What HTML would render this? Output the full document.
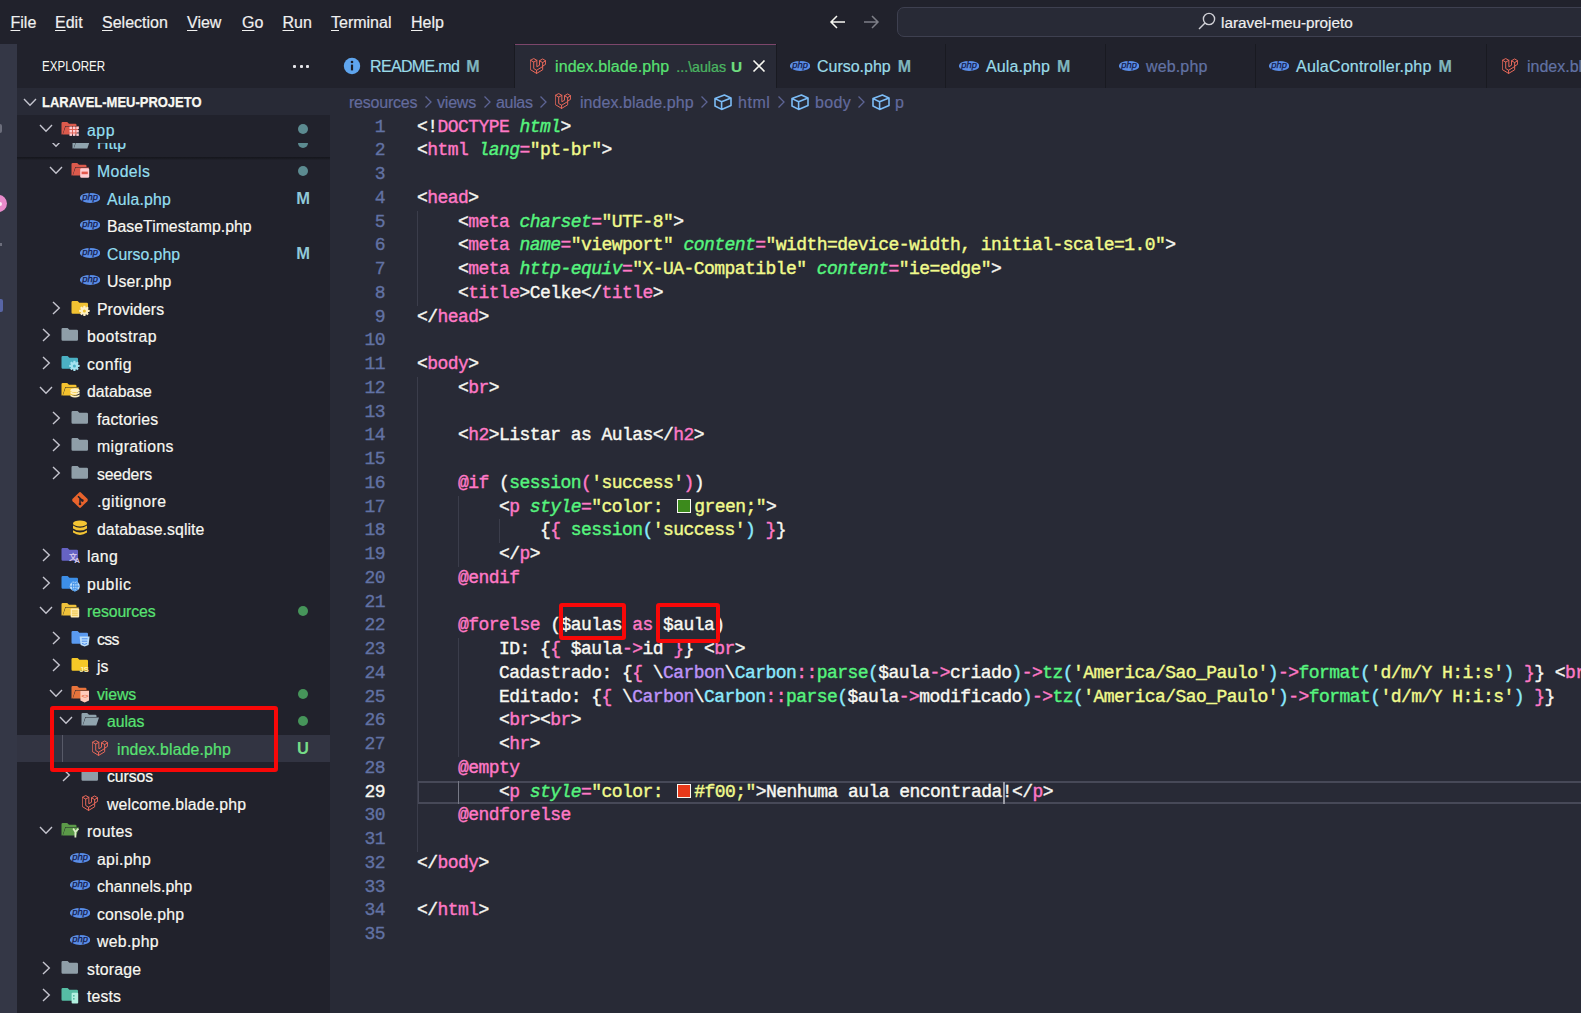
<!DOCTYPE html>
<html lang="pt-br"><head><meta charset="utf-8"><title>index.blade.php - laravel-meu-projeto</title>
<style>
html,body{margin:0;padding:0}
body{width:1581px;height:1013px;position:relative;overflow:hidden;background:#282a36;font-family:"Liberation Sans",sans-serif;color:#f8f8f2}
.ab{position:absolute}
#title{left:0;top:0;width:1581px;height:44px;background:#21222c}
.mi{top:0;height:45px;line-height:45px;font-size:16px;-webkit-text-stroke:0.2px;color:#f0f0f0;white-space:nowrap}
.mi u{text-underline-offset:2px}
#act{left:0;top:44px;width:17px;height:969px;background:#343746}
#side{left:17px;top:44px;width:313px;height:969px;background:#21222c}
#sechead{left:17px;top:88px;width:313px;height:27px;background:#282a36}
.lbl{height:27.5px;line-height:29.0px;font-size:15.8px;-webkit-text-stroke:0.2px;white-space:nowrap}
.bdg{width:20px;text-align:center;height:27.5px;line-height:26px;font-size:16.5px;font-weight:bold}
.dot{width:10px;height:10px;border-radius:5px}
#tabsbg{left:330px;top:44px;width:1251px;height:44px;background:#191a21}
.tl{height:44px;line-height:46px;font-size:16px;-webkit-text-stroke:0.2px;white-space:nowrap}
.tl .sfx{margin-left:7px;font-weight:bold;font-size:16px}
.tl .desc + .sfx{margin-left:5px;font-size:15.4px}
.tl .desc{margin-left:7px;font-size:14.2px;opacity:.75}
.bc{top:88px;height:27.5px;line-height:29px;font-size:16px;-webkit-text-stroke:0.2px;color:#636b9d;white-space:nowrap}
.ln{left:330px;width:55px;text-align:right;height:23.75px;line-height:23.8px;font-family:"Liberation Mono",monospace;font-size:18px;letter-spacing:-0.552px;color:#6272a4;-webkit-text-stroke:0.35px}
.ln.cur{color:#f8f8f2}
.cl{left:417px;height:23.75px;line-height:23.8px;font-family:"Liberation Mono",monospace;font-size:18px;letter-spacing:-0.552px;white-space:pre;color:#f8f8f2;-webkit-text-stroke:0.4px}
.cl .i{font-style:italic}
.sw{display:inline-block;width:14px;height:14px;margin:0 3.5px;vertical-align:-1px;border:1px solid #f8f8f2;box-sizing:border-box}
.rb{border:4px solid #f80808;border-radius:3px;box-sizing:border-box}
</style></head><body>
<div id="title" class="ab"></div>
<div class="ab mi" style="left:10.5px"><u>F</u>ile</div><div class="ab mi" style="left:55px"><u>E</u>dit</div><div class="ab mi" style="left:102px"><u>S</u>election</div><div class="ab mi" style="left:187px"><u>V</u>iew</div><div class="ab mi" style="left:242px"><u>G</u>o</div><div class="ab mi" style="left:282.5px"><u>R</u>un</div><div class="ab mi" style="left:331px"><u>T</u>erminal</div><div class="ab mi" style="left:411px"><u>H</u>elp</div>
<svg class="ab" style="left:829px;top:13px" width="18" height="18" viewBox="0 0 18 18"><path d="M16 9 H2.5 M8 3 L2 9 L8 15" fill="none" stroke="#f8f8f2" stroke-width="1.5"/></svg>
<svg class="ab" style="left:862px;top:13px" width="18" height="18" viewBox="0 0 18 18"><path d="M2 9 H15.5 M10 3 L16 9 L10 15" fill="none" stroke="#7e7f88" stroke-width="1.5"/></svg>
<div class="ab" style="left:897px;top:7px;width:720px;height:30px;box-sizing:border-box;border:1px solid #3e4050;border-radius:7px;background:#282a36"></div>
<svg class="ab" style="left:1197px;top:11px" width="20" height="20" viewBox="0 0 20 20"><circle cx="12" cy="8" r="5.6" fill="none" stroke="#d0d0d6" stroke-width="1.4"/><path d="M8 12 L2 18" stroke="#d0d0d6" stroke-width="1.4"/></svg>
<div class="ab mi" style="left:1221px;font-size:15.3px;line-height:46px">laravel-meu-projeto</div>

<div id="act" class="ab"></div>
<div class="ab" style="left:-10.5px;top:195px;width:17px;height:17px;border-radius:9px;background:#e88bcb"></div>
<div class="ab" style="left:-2.5px;top:201.5px;width:4px;height:4px;border-radius:2px;background:#f8eaf4"></div>
<div class="ab" style="left:0;top:124px;width:2px;height:9px;border-radius:0 2px 2px 0;background:#6c6e7c"></div>
<div class="ab" style="left:0;top:243px;width:2px;height:3px;background:#6c6e7c"></div>
<div class="ab" style="left:0;top:299px;width:2.5px;height:13px;border-radius:0 2px 2px 0;background:#5865a5"></div>
<div id="side" class="ab"></div>
<div class="ab" style="left:42px;top:44px;height:44px;line-height:45px;font-size:13.8px;color:#f8f8f2;transform:scaleX(.84);transform-origin:0 50%">EXPLORER</div>
<div class="ab" style="left:293px;top:64.5px;width:3px;height:3px;border-radius:1px;background:#e4e4e8"></div><div class="ab" style="left:299.5px;top:64.5px;width:3px;height:3px;border-radius:1px;background:#e4e4e8"></div><div class="ab" style="left:306px;top:64.5px;width:3px;height:3px;border-radius:1px;background:#e4e4e8"></div>
<div id="sechead" class="ab"></div>
<svg class="ab" style="left:23px;top:94.5px" width="14" height="14" viewBox="0 0 14 14"><path d="M1 4 L7 10.2 L13 4" fill="none" stroke="#c5c5cf" stroke-width="1.4"/></svg>
<div class="ab" style="left:42px;top:88px;height:27.5px;line-height:29.6px;font-size:13.8px;font-weight:bold;color:#f8f8f2;-webkit-text-stroke:0.25px;transform:scaleX(.94);transform-origin:0 50%">LARAVEL-MEU-PROJETO</div>
<svg class="ab" style="left:49px;top:163.2px" width="14" height="14" viewBox="0 0 14 14"><path d="M1 4 L7 10.2 L13 4" fill="none" stroke="#c5c5cf" stroke-width="1.4"/></svg><svg class="ab" style="left:70.3px;top:160.4px" width="20" height="20" viewBox="0 0 20 20"><path d="M1.5 4.2 Q1.5 3 2.7 3 H7.2 L9 4.8 H15.3 Q16.5 4.8 16.5 6 V7 H5.3 L2.6 15.5 H1.5 Z" fill="#dc5a4c"/><path d="M5.6 7.6 H19 L16.3 15.6 H2.8 Z" fill="#dc5a4c"/><rect x="10.2" y="8.3" width="9" height="9.4" rx="1.3" fill="#ffcdd2"/><rect x="11.6" y="11.6" width="6.2" height="2.6" fill="#e2574c"/></svg><div class="ab lbl" style="left:97px;top:157.25px;color:#93dff0;letter-spacing:0.377px">Models</div><div class="ab dot" style="left:298px;top:166.0px;background:#5c8b91"></div>
<svg class="ab" style="left:80px;top:188.5px" width="20" height="20" viewBox="0 0 20 20"><ellipse cx="10.1" cy="8.9" rx="10.2" ry="5" fill="#5a8de6"/><text x="10.1" y="11.3" text-anchor="middle" font-family="Liberation Sans, sans-serif" font-style="italic" font-size="9.4" fill="#141a48" stroke="#141a48" stroke-width="0.25">php</text></svg><div class="ab lbl" style="left:107px;top:184.75px;color:#93dff0;letter-spacing:0.216px">Aula.php</div><div class="ab bdg" style="left:293px;top:184.75px;color:#90c8d8">M</div>
<svg class="ab" style="left:80px;top:216.0px" width="20" height="20" viewBox="0 0 20 20"><ellipse cx="10.1" cy="8.9" rx="10.2" ry="5" fill="#5a8de6"/><text x="10.1" y="11.3" text-anchor="middle" font-family="Liberation Sans, sans-serif" font-style="italic" font-size="9.4" fill="#141a48" stroke="#141a48" stroke-width="0.25">php</text></svg><div class="ab lbl" style="left:107px;top:212.25px;color:#f8f8f2;letter-spacing:0.018px">BaseTimestamp.php</div>
<svg class="ab" style="left:80px;top:243.5px" width="20" height="20" viewBox="0 0 20 20"><ellipse cx="10.1" cy="8.9" rx="10.2" ry="5" fill="#5a8de6"/><text x="10.1" y="11.3" text-anchor="middle" font-family="Liberation Sans, sans-serif" font-style="italic" font-size="9.4" fill="#141a48" stroke="#141a48" stroke-width="0.25">php</text></svg><div class="ab lbl" style="left:107px;top:239.75px;color:#93dff0;letter-spacing:0.012px">Curso.php</div><div class="ab bdg" style="left:293px;top:239.75px;color:#90c8d8">M</div>
<svg class="ab" style="left:80px;top:271.0px" width="20" height="20" viewBox="0 0 20 20"><ellipse cx="10.1" cy="8.9" rx="10.2" ry="5" fill="#5a8de6"/><text x="10.1" y="11.3" text-anchor="middle" font-family="Liberation Sans, sans-serif" font-style="italic" font-size="9.4" fill="#141a48" stroke="#141a48" stroke-width="0.25">php</text></svg><div class="ab lbl" style="left:107px;top:267.25px;color:#f8f8f2;letter-spacing:0.146px">User.php</div>
<svg class="ab" style="left:49px;top:300.7px" width="14" height="14" viewBox="0 0 14 14"><path d="M4 1 L10.3 7 L4 13" fill="none" stroke="#c5c5cf" stroke-width="1.4"/></svg><svg class="ab" style="left:70.3px;top:297.9px" width="20" height="20" viewBox="0 0 20 20"><path d="M1.5 4.2 Q1.5 3 2.7 3 H7.6 L9.4 4.8 H16.8 Q18 4.8 18 6 V14.6 Q18 15.8 16.8 15.8 H2.7 Q1.5 15.8 1.5 14.6 Z" fill="#f1c232"/><rect x="13.3" y="7.7" width="2.2" height="10.4" rx="0.4" transform="rotate(0 14.4 12.9)" fill="#fff1c4"/><rect x="13.3" y="7.7" width="2.2" height="10.4" rx="0.4" transform="rotate(45 14.4 12.9)" fill="#fff1c4"/><rect x="13.3" y="7.7" width="2.2" height="10.4" rx="0.4" transform="rotate(90 14.4 12.9)" fill="#fff1c4"/><rect x="13.3" y="7.7" width="2.2" height="10.4" rx="0.4" transform="rotate(135 14.4 12.9)" fill="#fff1c4"/><circle cx="14.4" cy="12.9" r="3.7" fill="#fff1c4"/><circle cx="14.4" cy="12.9" r="1.5" fill="#f1c232"/></svg><div class="ab lbl" style="left:97px;top:294.75px;color:#f8f8f2;letter-spacing:0.041px">Providers</div>
<svg class="ab" style="left:39px;top:328.2px" width="14" height="14" viewBox="0 0 14 14"><path d="M4 1 L10.3 7 L4 13" fill="none" stroke="#c5c5cf" stroke-width="1.4"/></svg><svg class="ab" style="left:60.3px;top:325.4px" width="20" height="20" viewBox="0 0 20 20"><path d="M1.5 4.2 Q1.5 3 2.7 3 H7.6 L9.4 4.8 H16.8 Q18 4.8 18 6 V14.6 Q18 15.8 16.8 15.8 H2.7 Q1.5 15.8 1.5 14.6 Z" fill="#8f9ea8"/></svg><div class="ab lbl" style="left:87px;top:322.25px;color:#f8f8f2;letter-spacing:0.469px">bootstrap</div>
<svg class="ab" style="left:39px;top:355.7px" width="14" height="14" viewBox="0 0 14 14"><path d="M4 1 L10.3 7 L4 13" fill="none" stroke="#c5c5cf" stroke-width="1.4"/></svg><svg class="ab" style="left:60.3px;top:352.9px" width="20" height="20" viewBox="0 0 20 20"><path d="M1.5 4.2 Q1.5 3 2.7 3 H7.6 L9.4 4.8 H16.8 Q18 4.8 18 6 V14.6 Q18 15.8 16.8 15.8 H2.7 Q1.5 15.8 1.5 14.6 Z" fill="#4bb1c4"/><rect x="13.3" y="7.7" width="2.2" height="10.4" rx="0.4" transform="rotate(0 14.4 12.9)" fill="#a6e3f0"/><rect x="13.3" y="7.7" width="2.2" height="10.4" rx="0.4" transform="rotate(45 14.4 12.9)" fill="#a6e3f0"/><rect x="13.3" y="7.7" width="2.2" height="10.4" rx="0.4" transform="rotate(90 14.4 12.9)" fill="#a6e3f0"/><rect x="13.3" y="7.7" width="2.2" height="10.4" rx="0.4" transform="rotate(135 14.4 12.9)" fill="#a6e3f0"/><circle cx="14.4" cy="12.9" r="3.7" fill="#a6e3f0"/><circle cx="14.4" cy="12.9" r="1.5" fill="#4bb1c4"/></svg><div class="ab lbl" style="left:87px;top:349.75px;color:#f8f8f2;letter-spacing:0.474px">config</div>
<svg class="ab" style="left:39px;top:383.2px" width="14" height="14" viewBox="0 0 14 14"><path d="M1 4 L7 10.2 L13 4" fill="none" stroke="#c5c5cf" stroke-width="1.4"/></svg><svg class="ab" style="left:60.3px;top:380.4px" width="20" height="20" viewBox="0 0 20 20"><path d="M1.5 4.2 Q1.5 3 2.7 3 H7.2 L9 4.8 H15.3 Q16.5 4.8 16.5 6 V7 H5.3 L2.6 15.5 H1.5 Z" fill="#f4c22e"/><path d="M5.6 7.6 H19 L16.3 15.6 H2.8 Z" fill="#f4c22e"/><ellipse cx="15" cy="10.2" rx="4.6" ry="2" fill="#fff1c2"/><path d="M10.4 11.6 Q15 14.4 19.6 11.6 V13.4 Q15 16.2 10.4 13.4 Z M10.4 14.6 Q15 17.4 19.6 14.6 V16.2 Q15 19 10.4 16.2 Z" fill="#fff1c2"/></svg><div class="ab lbl" style="left:87px;top:377.25px;color:#f8f8f2;letter-spacing:-0.027px">database</div>
<svg class="ab" style="left:49px;top:410.7px" width="14" height="14" viewBox="0 0 14 14"><path d="M4 1 L10.3 7 L4 13" fill="none" stroke="#c5c5cf" stroke-width="1.4"/></svg><svg class="ab" style="left:70.3px;top:407.9px" width="20" height="20" viewBox="0 0 20 20"><path d="M1.5 4.2 Q1.5 3 2.7 3 H7.6 L9.4 4.8 H16.8 Q18 4.8 18 6 V14.6 Q18 15.8 16.8 15.8 H2.7 Q1.5 15.8 1.5 14.6 Z" fill="#8f9ea8"/></svg><div class="ab lbl" style="left:97px;top:404.75px;color:#f8f8f2;letter-spacing:0.166px">factories</div>
<svg class="ab" style="left:49px;top:438.2px" width="14" height="14" viewBox="0 0 14 14"><path d="M4 1 L10.3 7 L4 13" fill="none" stroke="#c5c5cf" stroke-width="1.4"/></svg><svg class="ab" style="left:70.3px;top:435.4px" width="20" height="20" viewBox="0 0 20 20"><path d="M1.5 4.2 Q1.5 3 2.7 3 H7.6 L9.4 4.8 H16.8 Q18 4.8 18 6 V14.6 Q18 15.8 16.8 15.8 H2.7 Q1.5 15.8 1.5 14.6 Z" fill="#8f9ea8"/></svg><div class="ab lbl" style="left:97px;top:432.25px;color:#f8f8f2;letter-spacing:0.402px">migrations</div>
<svg class="ab" style="left:49px;top:465.7px" width="14" height="14" viewBox="0 0 14 14"><path d="M4 1 L10.3 7 L4 13" fill="none" stroke="#c5c5cf" stroke-width="1.4"/></svg><svg class="ab" style="left:70.3px;top:462.9px" width="20" height="20" viewBox="0 0 20 20"><path d="M1.5 4.2 Q1.5 3 2.7 3 H7.6 L9.4 4.8 H16.8 Q18 4.8 18 6 V14.6 Q18 15.8 16.8 15.8 H2.7 Q1.5 15.8 1.5 14.6 Z" fill="#8f9ea8"/></svg><div class="ab lbl" style="left:97px;top:459.75px;color:#f8f8f2;letter-spacing:-0.172px">seeders</div>
<svg class="ab" style="left:70px;top:490.0px" width="20" height="20" viewBox="0 0 20 20"><rect x="4" y="4" width="12" height="12" rx="1.6" transform="rotate(45 10 10)" fill="#e8632c"/><path d="M8 6.2 L12.2 10.4 M10 8.2 V14" stroke="#21222c" stroke-width="1.5" fill="none"/><circle cx="10" cy="14" r="1.3" fill="#21222c"/><circle cx="12.4" cy="10.6" r="1.3" fill="#21222c"/></svg><div class="ab lbl" style="left:97px;top:487.25px;color:#f8f8f2;letter-spacing:0.45px">.gitignore</div>
<svg class="ab" style="left:70px;top:517.7px" width="20" height="20" viewBox="0 0 20 20" fill="#f4c533"><ellipse cx="10" cy="5.4" rx="7" ry="3"/><path d="M3 7.6 Q10 12 17 7.6 V10.4 Q10 14.8 3 10.4 Z M3 12.2 Q10 16.6 17 12.2 V14.6 Q10 19.4 3 14.6 Z"/></svg><div class="ab lbl" style="left:97px;top:514.75px;color:#f8f8f2;letter-spacing:0.075px">database.sqlite</div>
<svg class="ab" style="left:39px;top:548.2px" width="14" height="14" viewBox="0 0 14 14"><path d="M4 1 L10.3 7 L4 13" fill="none" stroke="#c5c5cf" stroke-width="1.4"/></svg><svg class="ab" style="left:60.3px;top:545.4px" width="20" height="20" viewBox="0 0 20 20"><path d="M1.5 4.2 Q1.5 3 2.7 3 H7.6 L9.4 4.8 H16.8 Q18 4.8 18 6 V14.6 Q18 15.8 16.8 15.8 H2.7 Q1.5 15.8 1.5 14.6 Z" fill="#6663c4"/><text x="9" y="14.5" font-family="Liberation Sans, Noto Sans CJK SC, sans-serif" font-size="8" font-weight="bold" fill="#d1c4e9">文</text><text x="14.2" y="17.6" font-family="Liberation Sans, sans-serif" font-size="8" font-weight="bold" fill="#d1c4e9">A</text></svg><div class="ab lbl" style="left:87px;top:542.25px;color:#f8f8f2;letter-spacing:0.281px">lang</div>
<svg class="ab" style="left:39px;top:575.7px" width="14" height="14" viewBox="0 0 14 14"><path d="M4 1 L10.3 7 L4 13" fill="none" stroke="#c5c5cf" stroke-width="1.4"/></svg><svg class="ab" style="left:60.3px;top:572.9px" width="20" height="20" viewBox="0 0 20 20"><path d="M1.5 4.2 Q1.5 3 2.7 3 H7.6 L9.4 4.8 H16.8 Q18 4.8 18 6 V14.6 Q18 15.8 16.8 15.8 H2.7 Q1.5 15.8 1.5 14.6 Z" fill="#3d8fe8"/><circle cx="14.8" cy="13.2" r="5" fill="#bbdefb"/><path d="M9.8 13.2 H19.8 M14.8 8.2 V18.2 M11.4 9.8 Q14.8 12 18.2 9.8 M11.4 16.6 Q14.8 14.4 18.2 16.6" stroke="#3d8fe8" stroke-width="0.9" fill="none"/><ellipse cx="14.8" cy="13.2" rx="2.3" ry="5" fill="none" stroke="#3d8fe8" stroke-width="0.9"/></svg><div class="ab lbl" style="left:87px;top:569.75px;color:#f8f8f2;letter-spacing:0.52px">public</div>
<svg class="ab" style="left:39px;top:603.2px" width="14" height="14" viewBox="0 0 14 14"><path d="M1 4 L7 10.2 L13 4" fill="none" stroke="#c5c5cf" stroke-width="1.4"/></svg><svg class="ab" style="left:60.3px;top:600.4px" width="20" height="20" viewBox="0 0 20 20"><path d="M1.5 4.2 Q1.5 3 2.7 3 H7.2 L9 4.8 H15.3 Q16.5 4.8 16.5 6 V7 H5.3 L2.6 15.5 H1.5 Z" fill="#f0c23a"/><path d="M5.6 7.6 H19 L16.3 15.6 H2.8 Z" fill="#f0c23a"/><rect x="10.6" y="8.6" width="8.6" height="9" rx="1" fill="#ffecb3"/><path d="M12 11 H17.8 M12 13.1 H17.8 M12 15.2 H17.8" stroke="#f0c23a" stroke-width="1"/></svg><div class="ab lbl" style="left:87px;top:597.25px;color:#58e272;letter-spacing:-0.084px">resources</div><div class="ab dot" style="left:298px;top:606.0px;background:#46955a"></div>
<svg class="ab" style="left:49px;top:630.7px" width="14" height="14" viewBox="0 0 14 14"><path d="M4 1 L10.3 7 L4 13" fill="none" stroke="#c5c5cf" stroke-width="1.4"/></svg><svg class="ab" style="left:70.3px;top:627.9px" width="20" height="20" viewBox="0 0 20 20"><path d="M1.5 4.2 Q1.5 3 2.7 3 H7.6 L9.4 4.8 H16.8 Q18 4.8 18 6 V14.6 Q18 15.8 16.8 15.8 H2.7 Q1.5 15.8 1.5 14.6 Z" fill="#5a9af0"/><path d="M9.6 8.6 H19.6 L18.6 17 L14.6 18.6 L10.6 17 Z" fill="#bbdefb"/><path d="M11.8 10.8 H17.6 M11.8 13.2 H17.2 M12 15.4 L14.6 16.4 L17 15.4" stroke="#4c8df0" stroke-width="1" fill="none"/></svg><div class="ab lbl" style="left:97px;top:624.75px;color:#f8f8f2;letter-spacing:-0.634px">css</div>
<svg class="ab" style="left:49px;top:658.2px" width="14" height="14" viewBox="0 0 14 14"><path d="M4 1 L10.3 7 L4 13" fill="none" stroke="#c5c5cf" stroke-width="1.4"/></svg><svg class="ab" style="left:70.3px;top:655.4px" width="20" height="20" viewBox="0 0 20 20"><path d="M1.5 4.2 Q1.5 3 2.7 3 H7.6 L9.4 4.8 H16.8 Q18 4.8 18 6 V14.6 Q18 15.8 16.8 15.8 H2.7 Q1.5 15.8 1.5 14.6 Z" fill="#f5c827"/><text x="9.6" y="17.4" font-family="Liberation Sans, sans-serif" font-size="7.5" font-weight="bold" fill="#fff3b0">JS</text></svg><div class="ab lbl" style="left:97px;top:652.25px;color:#f8f8f2;letter-spacing:-0.111px">js</div>
<svg class="ab" style="left:49px;top:685.7px" width="14" height="14" viewBox="0 0 14 14"><path d="M1 4 L7 10.2 L13 4" fill="none" stroke="#c5c5cf" stroke-width="1.4"/></svg><svg class="ab" style="left:70.3px;top:682.9px" width="20" height="20" viewBox="0 0 20 20"><path d="M1.5 4.2 Q1.5 3 2.7 3 H7.2 L9 4.8 H15.3 Q16.5 4.8 16.5 6 V7 H5.3 L2.6 15.5 H1.5 Z" fill="#e8743c"/><path d="M5.6 7.6 H19 L16.3 15.6 H2.8 Z" fill="#e8743c"/><path d="M10.4 8 H19 V17.4 L14.7 19.4 L10.4 17.4 Z" fill="#ffccbc"/><text x="11.4" y="15.4" font-family="Liberation Mono, monospace" font-size="6" font-weight="bold" fill="#e8683c">&lt;&gt;</text></svg><div class="ab lbl" style="left:97px;top:679.75px;color:#58e272;letter-spacing:-0.06px">views</div><div class="ab dot" style="left:298px;top:688.5px;background:#46955a"></div>
<svg class="ab" style="left:59px;top:713.2px" width="14" height="14" viewBox="0 0 14 14"><path d="M1 4 L7 10.2 L13 4" fill="none" stroke="#c5c5cf" stroke-width="1.4"/></svg><svg class="ab" style="left:80.3px;top:710.4px" width="20" height="20" viewBox="0 0 20 20"><path d="M1.5 4.2 Q1.5 3 2.7 3 H7.2 L9 4.8 H15.3 Q16.5 4.8 16.5 6 V7 H5.3 L2.6 15.5 H1.5 Z" fill="#90a4ae"/><path d="M5.6 7.6 H19 L16.3 15.6 H2.8 Z" fill="#90a4ae"/></svg><div class="ab lbl" style="left:107px;top:707.25px;color:#58e272;letter-spacing:-0.093px">aulas</div><div class="ab dot" style="left:298px;top:716.0px;background:#46955a"></div>
<div class="ab" style="left:17px;top:734.75px;width:313px;height:27.5px;background:#323442"></div>
<div class="ab" style="left:62px;top:734.75px;width:1px;height:27.5px;background:#585a68"></div>
<svg class="ab" style="left:91.7px;top:740.3px" width="16.2" height="16.2" viewBox="0 0 17 17" fill="none" stroke="#e8685a" stroke-width="1.05" stroke-linejoin="round" stroke-linecap="round"><path d="M0.6 2.4 L3.9 0.6 L7.2 2.4 V9.2 L10 7.6 V2.9 L13.3 1 L16.4 2.9 V6.6 L13.3 8.5 V12.4 L6.9 16.2 L0.6 12.3 Z"/><path d="M0.6 2.4 L3.9 4.3 L7.2 2.4 M3.9 4.3 V11 L6.9 12.9 L13.3 9 M6.9 12.9 V16.2 M10 2.9 L13.3 4.8 L16.4 2.9 M13.3 4.8 V8.5"/></svg><div class="ab lbl" style="left:117px;top:734.75px;color:#58e272;letter-spacing:0.156px">index.blade.php</div><div class="ab bdg" style="left:293px;top:734.75px;color:#76dc88">U</div>
<svg class="ab" style="left:59px;top:768.2px" width="14" height="14" viewBox="0 0 14 14"><path d="M4 1 L10.3 7 L4 13" fill="none" stroke="#c5c5cf" stroke-width="1.4"/></svg><svg class="ab" style="left:80.3px;top:765.4px" width="20" height="20" viewBox="0 0 20 20"><path d="M1.5 4.2 Q1.5 3 2.7 3 H7.6 L9.4 4.8 H16.8 Q18 4.8 18 6 V14.6 Q18 15.8 16.8 15.8 H2.7 Q1.5 15.8 1.5 14.6 Z" fill="#8f9ea8"/></svg><div class="ab lbl" style="left:107px;top:762.25px;color:#f8f8f2;letter-spacing:-0.055px">cursos</div>
<svg class="ab" style="left:81.7px;top:795.3px" width="16.2" height="16.2" viewBox="0 0 17 17" fill="none" stroke="#e8685a" stroke-width="1.05" stroke-linejoin="round" stroke-linecap="round"><path d="M0.6 2.4 L3.9 0.6 L7.2 2.4 V9.2 L10 7.6 V2.9 L13.3 1 L16.4 2.9 V6.6 L13.3 8.5 V12.4 L6.9 16.2 L0.6 12.3 Z"/><path d="M0.6 2.4 L3.9 4.3 L7.2 2.4 M3.9 4.3 V11 L6.9 12.9 L13.3 9 M6.9 12.9 V16.2 M10 2.9 L13.3 4.8 L16.4 2.9 M13.3 4.8 V8.5"/></svg><div class="ab lbl" style="left:107px;top:789.75px;color:#f8f8f2;letter-spacing:0.181px">welcome.blade.php</div>
<svg class="ab" style="left:39px;top:823.2px" width="14" height="14" viewBox="0 0 14 14"><path d="M1 4 L7 10.2 L13 4" fill="none" stroke="#c5c5cf" stroke-width="1.4"/></svg><svg class="ab" style="left:60.3px;top:820.4px" width="20" height="20" viewBox="0 0 20 20"><path d="M1.5 4.2 Q1.5 3 2.7 3 H7.2 L9 4.8 H15.3 Q16.5 4.8 16.5 6 V7 H5.3 L2.6 15.5 H1.5 Z" fill="#5b9a48"/><path d="M5.6 7.6 H19 L16.3 15.6 H2.8 Z" fill="#5b9a48"/><path d="M13.2 8.6 L15.4 12 V17.6 M18.4 8.6 L15.4 12" stroke="#dcedc8" stroke-width="1.8" fill="none"/></svg><div class="ab lbl" style="left:87px;top:817.25px;color:#f8f8f2;letter-spacing:0.316px">routes</div>
<svg class="ab" style="left:70px;top:848.5px" width="20" height="20" viewBox="0 0 20 20"><ellipse cx="10.1" cy="8.9" rx="10.2" ry="5" fill="#5a8de6"/><text x="10.1" y="11.3" text-anchor="middle" font-family="Liberation Sans, sans-serif" font-style="italic" font-size="9.4" fill="#141a48" stroke="#141a48" stroke-width="0.25">php</text></svg><div class="ab lbl" style="left:97px;top:844.75px;color:#f8f8f2;letter-spacing:0.31px">api.php</div>
<svg class="ab" style="left:70px;top:876.0px" width="20" height="20" viewBox="0 0 20 20"><ellipse cx="10.1" cy="8.9" rx="10.2" ry="5" fill="#5a8de6"/><text x="10.1" y="11.3" text-anchor="middle" font-family="Liberation Sans, sans-serif" font-style="italic" font-size="9.4" fill="#141a48" stroke="#141a48" stroke-width="0.25">php</text></svg><div class="ab lbl" style="left:97px;top:872.25px;color:#f8f8f2;letter-spacing:0.093px">channels.php</div>
<svg class="ab" style="left:70px;top:903.5px" width="20" height="20" viewBox="0 0 20 20"><ellipse cx="10.1" cy="8.9" rx="10.2" ry="5" fill="#5a8de6"/><text x="10.1" y="11.3" text-anchor="middle" font-family="Liberation Sans, sans-serif" font-style="italic" font-size="9.4" fill="#141a48" stroke="#141a48" stroke-width="0.25">php</text></svg><div class="ab lbl" style="left:97px;top:899.75px;color:#f8f8f2;letter-spacing:0.182px">console.php</div>
<svg class="ab" style="left:70px;top:931.0px" width="20" height="20" viewBox="0 0 20 20"><ellipse cx="10.1" cy="8.9" rx="10.2" ry="5" fill="#5a8de6"/><text x="10.1" y="11.3" text-anchor="middle" font-family="Liberation Sans, sans-serif" font-style="italic" font-size="9.4" fill="#141a48" stroke="#141a48" stroke-width="0.25">php</text></svg><div class="ab lbl" style="left:97px;top:927.25px;color:#f8f8f2;letter-spacing:0.309px">web.php</div>
<svg class="ab" style="left:39px;top:960.7px" width="14" height="14" viewBox="0 0 14 14"><path d="M4 1 L10.3 7 L4 13" fill="none" stroke="#c5c5cf" stroke-width="1.4"/></svg><svg class="ab" style="left:60.3px;top:957.9px" width="20" height="20" viewBox="0 0 20 20"><path d="M1.5 4.2 Q1.5 3 2.7 3 H7.6 L9.4 4.8 H16.8 Q18 4.8 18 6 V14.6 Q18 15.8 16.8 15.8 H2.7 Q1.5 15.8 1.5 14.6 Z" fill="#8f9ea8"/></svg><div class="ab lbl" style="left:87px;top:954.75px;color:#f8f8f2;letter-spacing:0.242px">storage</div>
<svg class="ab" style="left:39px;top:988.2px" width="14" height="14" viewBox="0 0 14 14"><path d="M4 1 L10.3 7 L4 13" fill="none" stroke="#c5c5cf" stroke-width="1.4"/></svg><svg class="ab" style="left:60.3px;top:985.4px" width="20" height="20" viewBox="0 0 20 20"><path d="M1.5 4.2 Q1.5 3 2.7 3 H7.6 L9.4 4.8 H16.8 Q18 4.8 18 6 V14.6 Q18 15.8 16.8 15.8 H2.7 Q1.5 15.8 1.5 14.6 Z" fill="#56bda4"/><rect x="11.6" y="7.8" width="6.6" height="10.6" rx="1" fill="#b2f0e0"/><rect x="13" y="10" width="1.6" height="1.6" fill="#56bda4"/><rect x="13" y="13" width="1.6" height="1.6" fill="#56bda4"/></svg><div class="ab lbl" style="left:87px;top:982.25px;color:#f8f8f2;letter-spacing:0.125px">tests</div>
<div class="ab" style="left:17px;top:143px;width:313px;height:14px;overflow:hidden;background:#21222c"><div style="position:absolute;left:-17px;top:-14px;width:330px;height:28px"><svg class="ab" style="left:49px;top:6.75px" width="14" height="14" viewBox="0 0 14 14"><path d="M1 4 L7 10.2 L13 4" fill="none" stroke="#c5c5cf" stroke-width="1.4"/></svg><svg class="ab" style="left:71px;top:3.75px" width="20" height="20" viewBox="0 0 20 20"><path d="M1.5 4.2 Q1.5 3 2.7 3 H7.2 L9 4.8 H15.3 Q16.5 4.8 16.5 6 V7 H5.3 L2.6 15.5 H1.5 Z" fill="#90a4ae"/><path d="M5.6 7.6 H19 L16.3 15.6 H2.8 Z" fill="#90a4ae"/></svg><div class="ab lbl" style="left:97px;top:0;color:#93dff0">Http</div><div class="ab dot" style="left:298px;top:8.75px;background:#5c8b91"></div></div></div>
<div class="ab" style="left:17px;top:115.5px;width:313px;height:27.5px;background:#21222c"></div>
<svg class="ab" style="left:39px;top:121.44999999999999px" width="14" height="14" viewBox="0 0 14 14"><path d="M1 4 L7 10.2 L13 4" fill="none" stroke="#c5c5cf" stroke-width="1.4"/></svg><svg class="ab" style="left:60.3px;top:118.65px" width="20" height="20" viewBox="0 0 20 20"><path d="M1.5 4.2 Q1.5 3 2.7 3 H7.2 L9 4.8 H15.3 Q16.5 4.8 16.5 6 V7 H5.3 L2.6 15.5 H1.5 Z" fill="#dc5a4c"/><path d="M5.6 7.6 H19 L16.3 15.6 H2.8 Z" fill="#dc5a4c"/><g fill="#ffcdd2"><rect x="9.5" y="7.6" width="2.5" height="2.5"/><rect x="9.5" y="11.0" width="2.5" height="2.5"/><rect x="9.5" y="14.399999999999999" width="2.5" height="2.5"/><rect x="12.9" y="7.6" width="2.5" height="2.5"/><rect x="12.9" y="11.0" width="2.5" height="2.5"/><rect x="12.9" y="14.399999999999999" width="2.5" height="2.5"/><rect x="16.3" y="7.6" width="2.5" height="2.5"/><rect x="16.3" y="11.0" width="2.5" height="2.5"/><rect x="16.3" y="14.399999999999999" width="2.5" height="2.5"/></g></svg><div class="ab lbl" style="left:87px;top:115.5px;color:#93dff0;letter-spacing:0.564px">app</div><div class="ab dot" style="left:298px;top:124.25px;background:#5c8b91"></div>
<div class="ab" style="left:17px;top:156.5px;width:313px;height:3.5px;background:linear-gradient(#15161c,#1a1b23 60%,rgba(26,27,35,0))"></div>
<div class="ab rb" style="left:50px;top:705.5px;width:228px;height:66px"></div>

<div id="tabsbg" class="ab"></div>
<div class="ab" style="left:330px;top:44px;width:184px;height:44px;background:#21222c"></div><svg class="ab" style="left:343px;top:57px" width="18" height="18" viewBox="0 0 18 18"><circle cx="9" cy="9" r="8.2" fill="#5fa5ee"/><rect x="7.9" y="7.6" width="2.2" height="5.8" fill="#1c1d26"/><circle cx="9" cy="5" r="1.3" fill="#1c1d26"/></svg><div class="ab tl" style="left:370px;top:44px;color:#9adbe8"><span style="letter-spacing:-0.647px">README.md</span><span class="sfx" style="color:#7fb5bd">M</span></div><div class="ab" style="left:515px;top:44px;width:261px;height:44px;background:#282a36;border-top:1px solid #7c466b;box-sizing:border-box"></div><svg class="ab" style="left:529.7px;top:58.0px" width="16.2" height="16.2" viewBox="0 0 17 17" fill="none" stroke="#e8685a" stroke-width="1.05" stroke-linejoin="round" stroke-linecap="round"><path d="M0.6 2.4 L3.9 0.6 L7.2 2.4 V9.2 L10 7.6 V2.9 L13.3 1 L16.4 2.9 V6.6 L13.3 8.5 V12.4 L6.9 16.2 L0.6 12.3 Z"/><path d="M0.6 2.4 L3.9 4.3 L7.2 2.4 M3.9 4.3 V11 L6.9 12.9 L13.3 9 M6.9 12.9 V16.2 M10 2.9 L13.3 4.8 L16.4 2.9 M13.3 4.8 V8.5"/></svg><div class="ab tl" style="left:555px;top:44px;color:#58e272"><span style="letter-spacing:0.088px">index.blade.php</span><span class="desc">...\aulas</span><span class="sfx" style="color:#6fdc80">U</span></div><div class="ab" style="left:777px;top:44px;width:168px;height:44px;background:#21222c"></div><svg class="ab" style="left:790px;top:57px" width="20" height="20" viewBox="0 0 20 20"><ellipse cx="10.1" cy="8.9" rx="10.2" ry="5" fill="#5a8de6"/><text x="10.1" y="11.3" text-anchor="middle" font-family="Liberation Sans, sans-serif" font-style="italic" font-size="9.4" fill="#141a48" stroke="#141a48" stroke-width="0.25">php</text></svg><div class="ab tl" style="left:817px;top:44px;color:#9adbe8"><span style="letter-spacing:-0.014px">Curso.php</span><span class="sfx" style="color:#7fb5bd">M</span></div><div class="ab" style="left:946px;top:44px;width:159px;height:44px;background:#21222c"></div><svg class="ab" style="left:959px;top:57px" width="20" height="20" viewBox="0 0 20 20"><ellipse cx="10.1" cy="8.9" rx="10.2" ry="5" fill="#5a8de6"/><text x="10.1" y="11.3" text-anchor="middle" font-family="Liberation Sans, sans-serif" font-style="italic" font-size="9.4" fill="#141a48" stroke="#141a48" stroke-width="0.25">php</text></svg><div class="ab tl" style="left:986px;top:44px;color:#9adbe8"><span style="letter-spacing:0.116px">Aula.php</span><span class="sfx" style="color:#7fb5bd">M</span></div><div class="ab" style="left:1106px;top:44px;width:149px;height:44px;background:#21222c"></div><svg class="ab" style="left:1119px;top:57px" width="20" height="20" viewBox="0 0 20 20"><ellipse cx="10.1" cy="8.9" rx="10.2" ry="5" fill="#5a8de6"/><text x="10.1" y="11.3" text-anchor="middle" font-family="Liberation Sans, sans-serif" font-style="italic" font-size="9.4" fill="#141a48" stroke="#141a48" stroke-width="0.25">php</text></svg><div class="ab tl" style="left:1146px;top:44px;color:#6272a4"><span style="letter-spacing:0.143px">web.php</span></div><div class="ab" style="left:1256px;top:44px;width:230px;height:44px;background:#21222c"></div><svg class="ab" style="left:1269px;top:57px" width="20" height="20" viewBox="0 0 20 20"><ellipse cx="10.1" cy="8.9" rx="10.2" ry="5" fill="#5a8de6"/><text x="10.1" y="11.3" text-anchor="middle" font-family="Liberation Sans, sans-serif" font-style="italic" font-size="9.4" fill="#141a48" stroke="#141a48" stroke-width="0.25">php</text></svg><div class="ab tl" style="left:1296px;top:44px;color:#9adbe8"><span style="letter-spacing:0.22px">AulaController.php</span><span class="sfx" style="color:#7fb5bd">M</span></div><div class="ab" style="left:1487px;top:44px;width:199px;height:44px;background:#21222c"></div><svg class="ab" style="left:1501.7px;top:58.0px" width="16.2" height="16.2" viewBox="0 0 17 17" fill="none" stroke="#e8685a" stroke-width="1.05" stroke-linejoin="round" stroke-linecap="round"><path d="M0.6 2.4 L3.9 0.6 L7.2 2.4 V9.2 L10 7.6 V2.9 L13.3 1 L16.4 2.9 V6.6 L13.3 8.5 V12.4 L6.9 16.2 L0.6 12.3 Z"/><path d="M0.6 2.4 L3.9 4.3 L7.2 2.4 M3.9 4.3 V11 L6.9 12.9 L13.3 9 M6.9 12.9 V16.2 M10 2.9 L13.3 4.8 L16.4 2.9 M13.3 4.8 V8.5"/></svg><div class="ab tl" style="left:1527px;top:44px;color:#6272a4"><span style="letter-spacing:0px">index.bl</span></div><svg class="ab" style="left:752px;top:59px" width="14" height="14" viewBox="0 0 14 14"><path d="M1.5 1.5 L12.5 12.5 M12.5 1.5 L1.5 12.5" stroke="#f8f8f2" stroke-width="1.6"/></svg>
<div class="ab bc" style="left:349px;letter-spacing:-0.228px">resources</div><svg class="ab" style="left:422px;top:95px" width="12" height="14" viewBox="0 0 12 14"><path d="M3.5 1.5 L9 7 L3.5 12.5" fill="none" stroke="#5d6494" stroke-width="1.3"/></svg><div class="ab bc" style="left:437px;letter-spacing:-0.203px">views</div><svg class="ab" style="left:481px;top:95px" width="12" height="14" viewBox="0 0 12 14"><path d="M3.5 1.5 L9 7 L3.5 12.5" fill="none" stroke="#5d6494" stroke-width="1.3"/></svg><div class="ab bc" style="left:496px;letter-spacing:-0.33px">aulas</div><svg class="ab" style="left:537px;top:95px" width="12" height="14" viewBox="0 0 12 14"><path d="M3.5 1.5 L9 7 L3.5 12.5" fill="none" stroke="#5d6494" stroke-width="1.3"/></svg><svg class="ab" style="left:554.7px;top:93.3px" width="16.2" height="16.2" viewBox="0 0 17 17" fill="none" stroke="#e8685a" stroke-width="1.05" stroke-linejoin="round" stroke-linecap="round"><path d="M0.6 2.4 L3.9 0.6 L7.2 2.4 V9.2 L10 7.6 V2.9 L13.3 1 L16.4 2.9 V6.6 L13.3 8.5 V12.4 L6.9 16.2 L0.6 12.3 Z"/><path d="M0.6 2.4 L3.9 4.3 L7.2 2.4 M3.9 4.3 V11 L6.9 12.9 L13.3 9 M6.9 12.9 V16.2 M10 2.9 L13.3 4.8 L16.4 2.9 M13.3 4.8 V8.5"/></svg><div class="ab bc" style="left:580px;letter-spacing:0.041px">index.blade.php</div><svg class="ab" style="left:698px;top:95px" width="12" height="14" viewBox="0 0 12 14"><path d="M3.5 1.5 L9 7 L3.5 12.5" fill="none" stroke="#5d6494" stroke-width="1.3"/></svg><svg class="ab" style="left:713px;top:91.5px" width="20" height="20" viewBox="0 0 20 20" fill="none" stroke="#7cbcf6" stroke-width="1.6" stroke-linejoin="round"><path d="M2 6.6 L11.4 3 L18 6 V13.4 L8.6 17.4 L2 14 Z M2 6.6 L8.6 9.8 L18 6 M8.6 9.8 V17.4"/></svg><div class="ab bc" style="left:738px;letter-spacing:0.516px">html</div><svg class="ab" style="left:775px;top:95px" width="12" height="14" viewBox="0 0 12 14"><path d="M3.5 1.5 L9 7 L3.5 12.5" fill="none" stroke="#5d6494" stroke-width="1.3"/></svg><svg class="ab" style="left:790px;top:91.5px" width="20" height="20" viewBox="0 0 20 20" fill="none" stroke="#7cbcf6" stroke-width="1.6" stroke-linejoin="round"><path d="M2 6.6 L11.4 3 L18 6 V13.4 L8.6 17.4 L2 14 Z M2 6.6 L8.6 9.8 L18 6 M8.6 9.8 V17.4"/></svg><div class="ab bc" style="left:815px;letter-spacing:0.374px">body</div><svg class="ab" style="left:855px;top:95px" width="12" height="14" viewBox="0 0 12 14"><path d="M3.5 1.5 L9 7 L3.5 12.5" fill="none" stroke="#5d6494" stroke-width="1.3"/></svg><svg class="ab" style="left:871px;top:91.5px" width="20" height="20" viewBox="0 0 20 20" fill="none" stroke="#7cbcf6" stroke-width="1.6" stroke-linejoin="round"><path d="M2 6.6 L11.4 3 L18 6 V13.4 L8.6 17.4 L2 14 Z M2 6.6 L8.6 9.8 L18 6 M8.6 9.8 V17.4"/></svg><div class="ab bc" style="left:895px;letter-spacing:0px">p</div>
<div class="ab" style="left:417px;top:780.5px;width:1180px;height:23.75px;box-sizing:border-box;border:2px solid #474958"></div>
<div class="ab" style="left:417px;top:210.5px;width:1px;height:95.0px;background:#3b3d4b"></div><div class="ab" style="left:417px;top:376.75px;width:1px;height:475.0px;background:#3b3d4b"></div><div class="ab" style="left:458px;top:495.5px;width:1px;height:71.25px;background:#3b3d4b"></div><div class="ab" style="left:499px;top:519.25px;width:1px;height:23.75px;background:#3b3d4b"></div><div class="ab" style="left:458px;top:638.0px;width:1px;height:118.75px;background:#3b3d4b"></div><div class="ab" style="left:458px;top:780.5px;width:1px;height:23.75px;background:#777986"></div>
<div class="ab ln" style="top:115.5px">1</div>
<div class="ab cl" style="top:115.5px"><span style="color:#f8f8f2">&lt;!</span><span style="color:#ff79c6">DOCTYPE</span> <span class="i" style="color:#56f47e">html</span><span style="color:#f8f8f2">&gt;</span></div>
<div class="ab ln" style="top:139.25px">2</div>
<div class="ab cl" style="top:139.25px"><span style="color:#f8f8f2">&lt;</span><span style="color:#ff79c6">html</span> <span class="i" style="color:#56f47e">lang</span><span style="color:#ff79c6">=</span><span style="color:#f1fa8c">"pt-br"</span><span style="color:#f8f8f2">&gt;</span></div>
<div class="ab ln" style="top:163.0px">3</div>
<div class="ab ln" style="top:186.75px">4</div>
<div class="ab cl" style="top:186.75px"><span style="color:#f8f8f2">&lt;</span><span style="color:#ff79c6">head</span><span style="color:#f8f8f2">&gt;</span></div>
<div class="ab ln" style="top:210.5px">5</div>
<div class="ab cl" style="top:210.5px">    <span style="color:#f8f8f2">&lt;</span><span style="color:#ff79c6">meta</span> <span class="i" style="color:#56f47e">charset</span><span style="color:#ff79c6">=</span><span style="color:#f1fa8c">"UTF-8"</span><span style="color:#f8f8f2">&gt;</span></div>
<div class="ab ln" style="top:234.25px">6</div>
<div class="ab cl" style="top:234.25px">    <span style="color:#f8f8f2">&lt;</span><span style="color:#ff79c6">meta</span> <span class="i" style="color:#56f47e">name</span><span style="color:#ff79c6">=</span><span style="color:#f1fa8c">"viewport"</span> <span class="i" style="color:#56f47e">content</span><span style="color:#ff79c6">=</span><span style="color:#f1fa8c">"width=device-width, initial-scale=1.0"</span><span style="color:#f8f8f2">&gt;</span></div>
<div class="ab ln" style="top:258.0px">7</div>
<div class="ab cl" style="top:258.0px">    <span style="color:#f8f8f2">&lt;</span><span style="color:#ff79c6">meta</span> <span class="i" style="color:#56f47e">http-equiv</span><span style="color:#ff79c6">=</span><span style="color:#f1fa8c">"X-UA-Compatible"</span> <span class="i" style="color:#56f47e">content</span><span style="color:#ff79c6">=</span><span style="color:#f1fa8c">"ie=edge"</span><span style="color:#f8f8f2">&gt;</span></div>
<div class="ab ln" style="top:281.75px">8</div>
<div class="ab cl" style="top:281.75px">    <span style="color:#f8f8f2">&lt;</span><span style="color:#ff79c6">title</span><span style="color:#f8f8f2">&gt;</span><span style="color:#f8f8f2">Celke</span><span style="color:#f8f8f2">&lt;/</span><span style="color:#ff79c6">title</span><span style="color:#f8f8f2">&gt;</span></div>
<div class="ab ln" style="top:305.5px">9</div>
<div class="ab cl" style="top:305.5px"><span style="color:#f8f8f2">&lt;/</span><span style="color:#ff79c6">head</span><span style="color:#f8f8f2">&gt;</span></div>
<div class="ab ln" style="top:329.25px">10</div>
<div class="ab ln" style="top:353.0px">11</div>
<div class="ab cl" style="top:353.0px"><span style="color:#f8f8f2">&lt;</span><span style="color:#ff79c6">body</span><span style="color:#f8f8f2">&gt;</span></div>
<div class="ab ln" style="top:376.75px">12</div>
<div class="ab cl" style="top:376.75px">    <span style="color:#f8f8f2">&lt;</span><span style="color:#ff79c6">br</span><span style="color:#f8f8f2">&gt;</span></div>
<div class="ab ln" style="top:400.5px">13</div>
<div class="ab ln" style="top:424.25px">14</div>
<div class="ab cl" style="top:424.25px">    <span style="color:#f8f8f2">&lt;</span><span style="color:#ff79c6">h2</span><span style="color:#f8f8f2">&gt;</span><span style="color:#f8f8f2">Listar as Aulas</span><span style="color:#f8f8f2">&lt;/</span><span style="color:#ff79c6">h2</span><span style="color:#f8f8f2">&gt;</span></div>
<div class="ab ln" style="top:448.0px">15</div>
<div class="ab ln" style="top:471.75px">16</div>
<div class="ab cl" style="top:471.75px">    <span style="color:#ff79c6">@if</span> <span style="color:#f8f8f2">(</span><span style="color:#56f47e">session</span><span style="color:#ff79c6">(</span><span style="color:#f1fa8c">'success'</span><span style="color:#ff79c6">)</span><span style="color:#f8f8f2">)</span></div>
<div class="ab ln" style="top:495.5px">17</div>
<div class="ab cl" style="top:495.5px">        <span style="color:#f8f8f2">&lt;</span><span style="color:#ff79c6">p</span> <span class="i" style="color:#56f47e">style</span><span style="color:#ff79c6">=</span><span style="color:#f1fa8c">"color: </span><span class="sw" style="background:#3c8a1c"></span><span style="color:#f1fa8c">green;"</span><span style="color:#f8f8f2">&gt;</span></div>
<div class="ab ln" style="top:519.25px">18</div>
<div class="ab cl" style="top:519.25px">            <span style="color:#f8f8f2">{</span><span style="color:#ff79c6">{</span> <span style="color:#56f47e">session</span><span style="color:#8be9fd">(</span><span style="color:#f1fa8c">'success'</span><span style="color:#8be9fd">)</span> <span style="color:#ff79c6">}</span><span style="color:#f8f8f2">}</span></div>
<div class="ab ln" style="top:543.0px">19</div>
<div class="ab cl" style="top:543.0px">        <span style="color:#f8f8f2">&lt;/</span><span style="color:#ff79c6">p</span><span style="color:#f8f8f2">&gt;</span></div>
<div class="ab ln" style="top:566.75px">20</div>
<div class="ab cl" style="top:566.75px">    <span style="color:#ff79c6">@endif</span></div>
<div class="ab ln" style="top:590.5px">21</div>
<div class="ab ln" style="top:614.25px">22</div>
<div class="ab cl" style="top:614.25px">    <span style="color:#ff79c6">@forelse</span> <span style="color:#f8f8f2">($aulas </span><span style="color:#ff79c6">as</span><span style="color:#f8f8f2"> $aula)</span></div>
<div class="ab ln" style="top:638.0px">23</div>
<div class="ab cl" style="top:638.0px">        <span style="color:#f8f8f2">ID: </span><span style="color:#f8f8f2">{</span><span style="color:#ff79c6">{</span><span style="color:#f8f8f2"> $aula</span><span style="color:#ff79c6">-&gt;</span><span style="color:#f8f8f2">id </span><span style="color:#ff79c6">}</span><span style="color:#f8f8f2">} </span><span style="color:#f8f8f2">&lt;</span><span style="color:#ff79c6">br</span><span style="color:#f8f8f2">&gt;</span></div>
<div class="ab ln" style="top:661.75px">24</div>
<div class="ab cl" style="top:661.75px">        <span style="color:#f8f8f2">Cadastrado: </span><span style="color:#f8f8f2">{</span><span style="color:#ff79c6">{</span><span style="color:#f8f8f2"> \</span><span style="color:#bd93f9">Carbon</span><span style="color:#f8f8f2">\</span><span style="color:#8be9fd">Carbon</span><span style="color:#ff79c6">::</span><span style="color:#56f47e">parse</span><span style="color:#8be9fd">(</span><span style="color:#f8f8f2">$aula</span><span style="color:#ff79c6">-&gt;</span><span style="color:#f8f8f2">criado</span><span style="color:#8be9fd">)</span><span style="color:#ff79c6">-&gt;</span><span style="color:#56f47e">tz</span><span style="color:#8be9fd">(</span><span style="color:#f1fa8c">'America/Sao_Paulo'</span><span style="color:#8be9fd">)</span><span style="color:#ff79c6">-&gt;</span><span style="color:#56f47e">format</span><span style="color:#8be9fd">(</span><span style="color:#f1fa8c">'d/m/Y H:i:s'</span><span style="color:#8be9fd">)</span> <span style="color:#ff79c6">}</span><span style="color:#f8f8f2">}</span> <span style="color:#f8f8f2">&lt;</span><span style="color:#ff79c6">br</span><span style="color:#f8f8f2">&gt;</span></div>
<div class="ab ln" style="top:685.5px">25</div>
<div class="ab cl" style="top:685.5px">        <span style="color:#f8f8f2">Editado: </span><span style="color:#f8f8f2">{</span><span style="color:#ff79c6">{</span><span style="color:#f8f8f2"> \</span><span style="color:#bd93f9">Carbon</span><span style="color:#f8f8f2">\</span><span style="color:#8be9fd">Carbon</span><span style="color:#ff79c6">::</span><span style="color:#56f47e">parse</span><span style="color:#8be9fd">(</span><span style="color:#f8f8f2">$aula</span><span style="color:#ff79c6">-&gt;</span><span style="color:#f8f8f2">modificado</span><span style="color:#8be9fd">)</span><span style="color:#ff79c6">-&gt;</span><span style="color:#56f47e">tz</span><span style="color:#8be9fd">(</span><span style="color:#f1fa8c">'America/Sao_Paulo'</span><span style="color:#8be9fd">)</span><span style="color:#ff79c6">-&gt;</span><span style="color:#56f47e">format</span><span style="color:#8be9fd">(</span><span style="color:#f1fa8c">'d/m/Y H:i:s'</span><span style="color:#8be9fd">)</span> <span style="color:#ff79c6">}</span><span style="color:#f8f8f2">}</span></div>
<div class="ab ln" style="top:709.25px">26</div>
<div class="ab cl" style="top:709.25px">        <span style="color:#f8f8f2">&lt;</span><span style="color:#ff79c6">br</span><span style="color:#f8f8f2">&gt;</span><span style="color:#f8f8f2">&lt;</span><span style="color:#ff79c6">br</span><span style="color:#f8f8f2">&gt;</span></div>
<div class="ab ln" style="top:733.0px">27</div>
<div class="ab cl" style="top:733.0px">        <span style="color:#f8f8f2">&lt;</span><span style="color:#ff79c6">hr</span><span style="color:#f8f8f2">&gt;</span></div>
<div class="ab ln" style="top:756.75px">28</div>
<div class="ab cl" style="top:756.75px">    <span style="color:#ff79c6">@empty</span></div>
<div class="ab ln cur" style="top:780.5px">29</div>
<div class="ab cl" style="top:780.5px">        <span style="color:#f8f8f2">&lt;</span><span style="color:#ff79c6">p</span> <span class="i" style="color:#56f47e">style</span><span style="color:#ff79c6">=</span><span style="color:#f1fa8c">"color: </span><span class="sw" style="background:#e8391a"></span><span style="color:#f1fa8c">#f00;"</span><span style="color:#f8f8f2">&gt;</span><span style="color:#f8f8f2">Nenhuma aula encontrada!</span><span style="color:#f8f8f2">&lt;/</span><span style="color:#ff79c6">p</span><span style="color:#f8f8f2">&gt;</span></div>
<div class="ab ln" style="top:804.25px">30</div>
<div class="ab cl" style="top:804.25px">    <span style="color:#ff79c6">@endforelse</span></div>
<div class="ab ln" style="top:828.0px">31</div>
<div class="ab ln" style="top:851.75px">32</div>
<div class="ab cl" style="top:851.75px"><span style="color:#f8f8f2">&lt;/</span><span style="color:#ff79c6">body</span><span style="color:#f8f8f2">&gt;</span></div>
<div class="ab ln" style="top:875.5px">33</div>
<div class="ab ln" style="top:899.25px">34</div>
<div class="ab cl" style="top:899.25px"><span style="color:#f8f8f2">&lt;/</span><span style="color:#ff79c6">html</span><span style="color:#f8f8f2">&gt;</span></div>
<div class="ab ln" style="top:923.0px">35</div>
<div class="ab" style="left:1003px;top:781.5px;width:2px;height:22px;background:#9a9ba4"></div>
<div class="ab rb" style="left:558.5px;top:602.5px;width:67px;height:37.5px"></div>
<div class="ab rb" style="left:655.8px;top:602.5px;width:64.2px;height:40px"></div>
</body></html>
